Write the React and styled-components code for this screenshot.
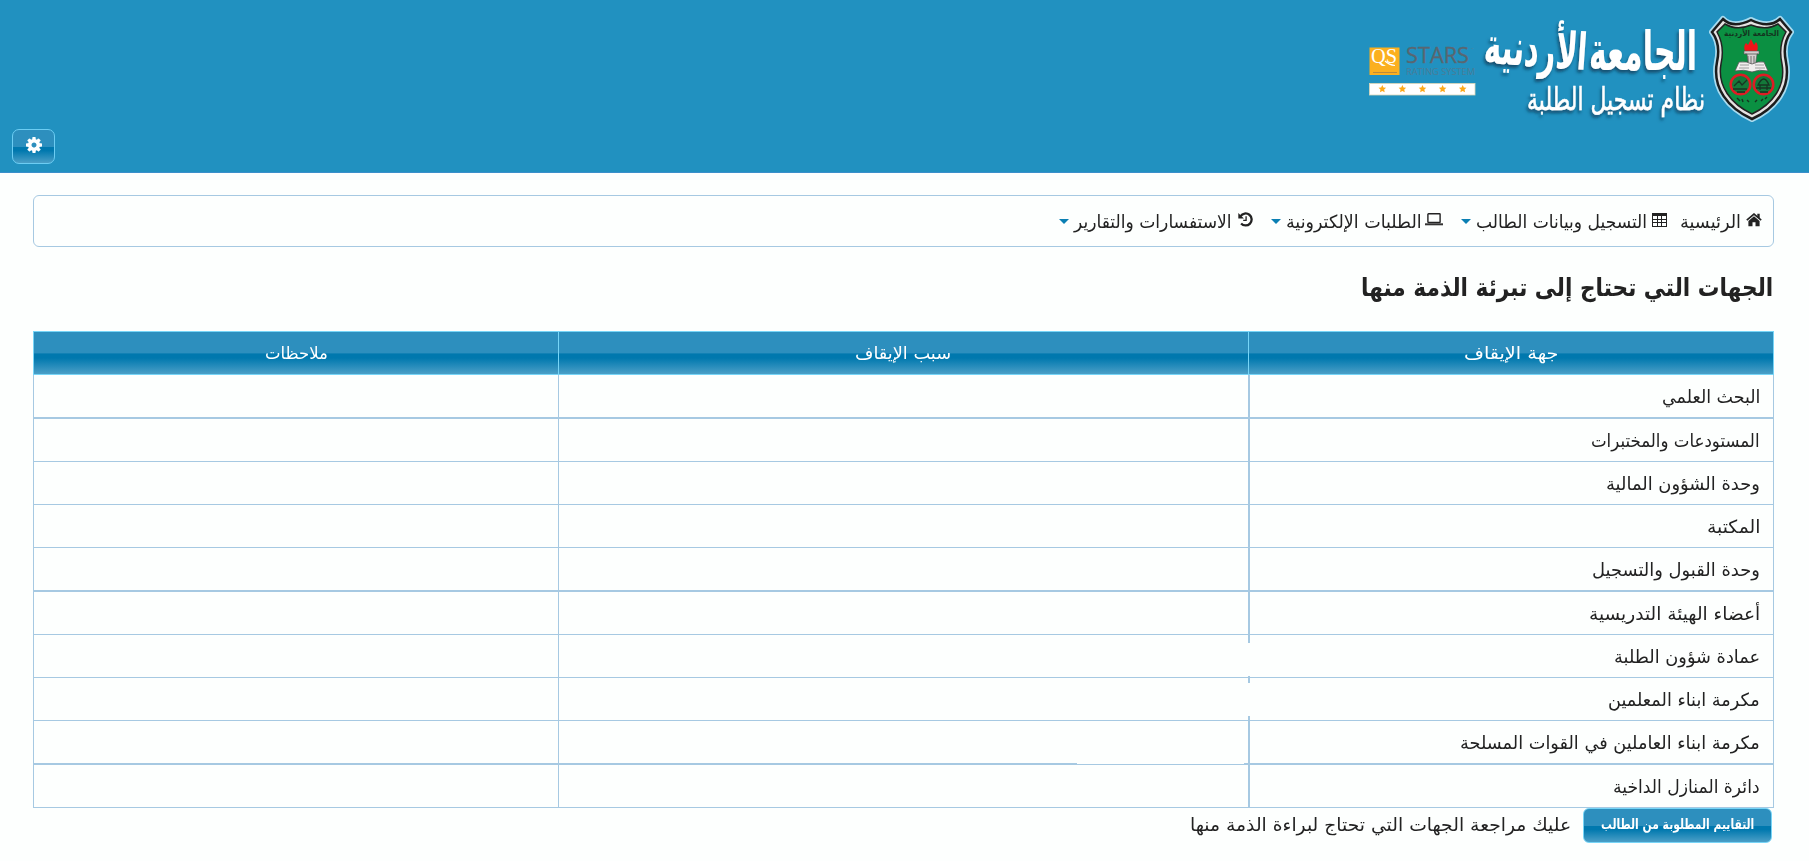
import React, { useLayoutEffect, useRef, useState } from "react";
import styled, { createGlobalStyle, css } from "styled-components";

const GlobalStyle = createGlobalStyle`
  * { box-sizing: border-box; }
  body {
    margin: 0;
    background: #fdfffe;
    color: #222;
    font-family: "DejaVu Sans", "Noto Sans", sans-serif;
    font-size: 18px;
    overflow: hidden;
  }
`;

const glossy = css`
  background: linear-gradient(to bottom, #2d8fbe 0, #2d8fbe 50%, #0078ae 52%, #0078ae 62%, #4b9fc7 100%);
  color: #fff;
`;

const Page = styled.div`
  min-height: 861px;
`;

const Header = styled.header`
  height: 173px;
  padding: 10px 4px 8px 12px;
  background: #2191c0;
  border-bottom: 1px solid #3a8fcb;
  display: flex;
  justify-content: space-between;
  align-items: flex-end;
`;

const Brand = styled.svg`
  width: 440px;
  height: 118px;
  align-self: flex-start;
`;

const SettingsButton = styled.button`
  ${glossy}
  width: 43px;
  height: 35px;
  padding: 0 0 4px;
  border: 1px solid #6ccdf3;
  border-radius: 7px;
  display: grid;
  place-items: center;
`;

const Main = styled.main`
  padding: 22px 35px 0 33px;
`;

const Menu = styled.nav`
  height: 52px;
  padding: 0 11px 0 0;
  border: 1px solid #a6c9e2;
  border-radius: 6px;
  display: flex;
  align-items: center;
`;

const MenuItem = styled.div`
  display: flex;
  align-items: center;
  height: 50px;
  margin-left: ${(p) => p.$after}px;
`;

const IconBox = styled.span`
  display: flex;
  flex: none;
  margin-left: ${(p) => p.$gap}px;
  padding-bottom: 3px;
`;

const Caret = styled.span`
  margin-right: 5px;
  border: 5px solid transparent;
  border-top-color: #0b7fb3;
  border-bottom: 0;
`;

const Title = styled.h1`
  margin: 0;
  height: 84px;
  padding: 22px 1px 0 0;
  font-size: 25px;
  line-height: 37px;
  font-weight: 700;
`;

const Table = styled.div`
  width: 1741px;
  border: 1px solid #a6c9e2;
  border-top: 0;
  border-bottom: 0;
`;

const Row = styled.div`
  display: grid;
  grid-template-columns: 525px 690px 524px;
  height: ${(p) => (p.$thick ? 44 : 43)}px;
`;

const Cell = styled.div`
  position: relative;
  display: flex;
  align-items: center;
  padding: 1px 13px 0;
  border: 0 solid #a6c9e2;
  border-bottom-width: ${(p) => (p.$thick ? 2 : 1)}px;
  border-left-width: ${(p) => p.$divider}px;
`;

const DividerBreak = styled.i`
  position: absolute;
  top: ${(p) => p.$top}px;
  left: -2px;
  width: 2px;
  height: 33px;
  background: #fdfffe;
`;

const BorderBreak = styled.i`
  position: absolute;
  right: 4px;
  bottom: -1px;
  width: 167px;
  height: 1px;
  background: #fdfffe;
`;

const HeadRow = styled(Row)`
  ${glossy}
  height: 44px;
  width: 1741px;
  margin: 0 -1px;
  border: 1px solid #77d5f7;
`;

const HeadCell = styled.div`
  display: flex;
  align-items: center;
  justify-content: center;
  font-size: 17px;
  padding-bottom: 1px;
  border-left: ${(p) => p.$divider}px solid #77d5f7;
`;

const Footer = styled.div`
  display: flex;
  align-items: flex-start;
  padding-right: 2px;
`;

const ReviewButton = styled.button`
  ${glossy}
  width: 189px;
  height: 35px;
  padding: 0 0 3px;
  border: 1px solid #77d5f7;
  border-radius: 6px;
  font: 700 14px "DejaVu Sans", sans-serif;
  display: flex;
  align-items: center;
  justify-content: center;
`;

const Notice = styled.div`
  margin-right: 12px;
  line-height: 33px;
`;

const LabelBox = styled.span`
  display: inline-block;
  flex: none;
  width: ${(p) => p.$width}px;
  white-space: nowrap;
`;

const LabelText = styled.span`
  display: inline-block;
  transform-origin: right center;
`;

// Keeps a caption at its designed width whatever the installed Arabic face measures.
function Label({ width, children }) {
  const ref = useRef(null);
  const [scale, setScale] = useState(1);
  useLayoutEffect(() => {
    setScale(width / ref.current.offsetWidth);
  }, [width, children]);
  return (
    <LabelBox $width={width}>
      <LabelText ref={ref} style={{ transform: `scaleX(${scale})` }}>{children}</LabelText>
    </LabelBox>
  );
}

const GearIcon = () => (
  <svg width="16" height="16" viewBox="-8 -8 16 16">
    <circle r="4.300" fill="none" stroke="#fff" strokeWidth="3.600" />
    {[0, 45, 90, 135, 180, 225, 270, 315].map((a) => (
      <rect key={a} x="-1.700" y="-8" width="3.400" height="3.500" rx=".7" fill="#fff" transform={`rotate(${a})`} />
    ))}
  </svg>
);

const HomeIcon = () => (
  <svg width="16" height="14" viewBox="0 0 16 14">
    <path d="M.8 7.200 8 1.100l7.200 6.100" fill="none" stroke="#222" strokeWidth="1.700" />
    <path d="M11.300.8h2.400v5l-2.400-2z" fill="#222" />
    <path d="M8 3.200 13.600 8v5.200H9.500V9.300h-3v3.900H2.400V8z" fill="#222" />
  </svg>
);

const HistoryIcon = () => (
  <svg width="15" height="15" viewBox="0 0 15 15">
    <path d="M2.600 4.200A6 6 0 1 1 3.100 11.400" fill="none" stroke="#222" strokeWidth="2.300" />
    <path d="M.3.900v5.600h5.600z" fill="#222" />
    <path d="M8.100 4.200v4.200H5.200" fill="none" stroke="#222" strokeWidth="1.300" />
  </svg>
);

const TableIcon = () => (
  <svg width="15" height="14" viewBox="0 0 15 14" shapeRendering="crispEdges">
    <path d="M0 0h15v3H0z" fill="#222" />
    <path d="M.5 2v11.500h14V2M0 6.500h15M0 9.500h15M5.500 3v11M9.500 3v11" fill="none" stroke="#222" />
  </svg>
);

const LaptopIcon = () => (
  <svg width="18" height="13" viewBox="0 0 18 13">
    <rect x="2.900" y=".7" width="12.200" height="8.800" rx=".6" fill="none" stroke="#222" strokeWidth="1.400" />
    <path d="M0 10.300h18v2H0z" fill="#333" />
  </svg>
);

const starPath = "M0-3.900 1.150-1.500 3.800-1.200 1.850.6 2.350 3.300 0 2-2.350 3.300-1.850.6-3.800-1.200-1.150-1.500z";

function Logo() {
  const outline = "M1723 19Q1733 29 1751 20Q1769 29 1780 19L1791 32Q1782 44 1786 62C1791 88 1776 108 1752 119C1728 108 1712 88 1717 62Q1721 44 1712 32z";
  return (
    <Brand viewBox="1365 10 440 118">
      <defs>
        <filter id="shade" x="-10%" y="-20%" width="120%" height="150%">
          <feDropShadow dx="-1.500" dy="3" stdDeviation="1.500" floodColor="#123d5c" floodOpacity=".75" />
        </filter>
      </defs>
      <rect x="1369.500" y="47.500" width="30" height="27.500" fill="#fbb01f" />
      <text x="1371" y="63" fontFamily="Liberation Serif, serif" fontSize="20" fill="#fff" textLength="26" lengthAdjust="spacingAndGlyphs">QS</text>
      <path d="M1385 61q4 4 10 4.500" stroke="#fff" strokeWidth="1.200" fill="none" />
      <path d="M1373 72.500h24" stroke="#b98a3c" strokeWidth="1" />
      <text x="1406" y="63" fontFamily="Open Sans, sans-serif" fontSize="21.500" fill="#5a6670" stroke="#5a6670" strokeWidth=".3" textLength="63" lengthAdjust="spacingAndGlyphs">STARS</text>
      <text x="1471" y="50" fontFamily="Open Sans, sans-serif" fontSize="3" fill="#5b7f93">™</text>
      <text x="1406" y="75" fontFamily="Open Sans, sans-serif" fontSize="9" fill="#4b7c96" textLength="69" lengthAdjust="spacingAndGlyphs">RATING SYSTEM</text>
      <rect x="1369.500" y="83.500" width="105.500" height="11.500" fill="#fff" stroke="#dcd8b8" strokeWidth=".8" />
      {[1382.3, 1402.4, 1422.5, 1442.6, 1462.7].map((x) => (
        <path key={x} transform={`translate(${x} 89)`} d={starPath} fill="#fba919" />
      ))}
      <g filter="url(#shade)" fill="#fff" fontFamily="DejaVu Sans, sans-serif" direction="rtl">
        <text transform="translate(1697 70) scale(1 1.550)" fontSize="35" fontWeight="700" textLength="108" lengthAdjust="spacingAndGlyphs">الجامعة</text>
        <text transform="translate(1586 70) rotate(4) scale(1 1.450)" fontSize="35" fontWeight="700" textLength="103" lengthAdjust="spacingAndGlyphs">الأردنية</text>
        <text transform="translate(1705 110) scale(1 1.250)" fontSize="25" stroke="#fff" strokeWidth=".4" textLength="178" lengthAdjust="spacingAndGlyphs">نظام تسجيل الطلبة</text>
      </g>
      <path d={outline} fill="#e8eef0" stroke="#a9dcf0" strokeWidth="6" strokeLinejoin="round" />
      <path d={outline} fill="#e6e2e2" stroke="#1c1c1c" strokeWidth="2.500" />
      <path d="M1725 24Q1737 31 1751 25Q1766 31 1778 24L1786 32Q1778 46 1782 64C1786 86 1773 104 1752 114C1731 104 1717 86 1721 64Q1725 46 1717 32z" fill="#0b9042" stroke="#222" strokeWidth="1.500" />
      <text fill="#14341f" fontFamily="DejaVu Sans, sans-serif" fontWeight="700" fontSize="8" direction="rtl" x="1779" y="36" textLength="55" lengthAdjust="spacingAndGlyphs">الجامعة الأردنية</text>
      <path d="M1745 51q-2-5 1-8l2 2 3-6 3 6 2-3q3 4 1 9z" fill="#f01519" />
      <path d="M1744 51h15v3h-2l-2 14h-6l-2-14h-3z" fill="#d5d0d0" stroke="#555" strokeWidth=".6" />
      <path d="M1745 54h13M1748 56v7M1751 56v9M1754 56v7" stroke="#555" strokeWidth=".8" />
      <path d="M1739 62q8-1 13 2 6-3 12-2l4 9q-9-2-16 1-8-3-17-1z" fill="#f1eeee" stroke="#555" strokeWidth=".8" />
      <path d="M1740 65h9M1755 65h9M1739 68h10M1755 68h10" stroke="#888" strokeWidth=".8" />
      <g fill="#14793a" stroke="#df1c24" strokeWidth="2.500">
        <circle cx="1740.500" cy="84.500" r="9.800" />
        <circle cx="1763.500" cy="84.500" r="9.800" />
      </g>
      <path d="M1734 86l5-5 3 4 5-5M1733 89h14M1737 92h8M1756 88h15M1758 85q6-12 11 0zM1760 92h8M1760 85v5M1767 85v5" stroke="#173522" strokeWidth="1.300" fill="none" />
      <path d="M1737 98l3 3m2-2 1 3m4-2 2 2m6 0 2-2m4 1 2-2m2 0 2-2" stroke="#14341f" strokeWidth="1.400" />
    </Brand>
  );
}

const menu = [
  { text: "الرئيسية", width: 61, icon: <HomeIcon />, gap: 5, after: 13 },
  { text: "التسجيل وبيانات الطالب", width: 171, icon: <TableIcon />, gap: 5, after: 18, sub: true },
  { text: "الطلبات الإلكترونية", width: 136, icon: <LaptopIcon />, gap: 3, after: 18, sub: true },
  { text: "الاستفسارات والتقارير", width: 158, icon: <HistoryIcon />, gap: 6, after: 0, sub: true },
];

const rows = [
  { text: "البحث العلمي", width: 98, thick: true },
  { text: "المستودعات والمختبرات", width: 169 },
  { text: "وحدة الشؤون المالية", width: 154 },
  { text: "المكتبة", width: 53 },
  { text: "وحدة القبول والتسجيل", width: 168, thick: true },
  { text: "أعضاء الهيئة التدريسية", width: 171 },
  { text: "عمادة شؤون الطلبة", width: 146, breakTop: 8 },
  { text: "مكرمة ابناء المعلمين", width: 152, breakTop: 5 },
  { text: "مكرمة ابناء العاملين في القوات المسلحة", width: 300, thick: true, lineBreak: true },
  { text: "دائرة المنازل الداخية", width: 147 },
];

export default function App() {
  return (
    <Page>
      <GlobalStyle />
      <Header>
        <SettingsButton aria-label="settings"><GearIcon /></SettingsButton>
        <Logo />
      </Header>
      <Main dir="rtl">
        <Menu>
          {menu.map((m) => (
            <MenuItem key={m.text} $after={m.after}>
              <IconBox $gap={m.gap}>{m.icon}</IconBox>
              <Label width={m.width}>{m.text}</Label>
              {m.sub && <Caret />}
            </MenuItem>
          ))}
        </Menu>
        <Title><Label width={412}>الجهات التي تحتاج إلى تبرئة الذمة منها</Label></Title>
        <Table>
          <HeadRow>
            <HeadCell $divider={1}><Label width={94}>جهة الإيقاف</Label></HeadCell>
            <HeadCell $divider={1}><Label width={96}>سبب الإيقاف</Label></HeadCell>
            <HeadCell $divider={0}><Label width={63}>ملاحظات</Label></HeadCell>
          </HeadRow>
          {rows.map((r) => (
            <Row key={r.text} $thick={r.thick}>
              <Cell $thick={r.thick} $divider={2}>
                <Label width={r.width}>{r.text}</Label>
                {r.breakTop && <DividerBreak $top={r.breakTop} />}
              </Cell>
              <Cell $thick={r.thick} $divider={1}>{r.lineBreak && <BorderBreak />}</Cell>
              <Cell $thick={r.thick} $divider={0} />
            </Row>
          ))}
        </Table>
        <Footer>
          <ReviewButton><Label width={153}>التقاييم المطلوبة من الطالب</Label></ReviewButton>
          <Notice><Label width={381}>عليك مراجعة الجهات التي تحتاج لبراءة الذمة منها</Label></Notice>
        </Footer>
      </Main>
    </Page>
  );
}
